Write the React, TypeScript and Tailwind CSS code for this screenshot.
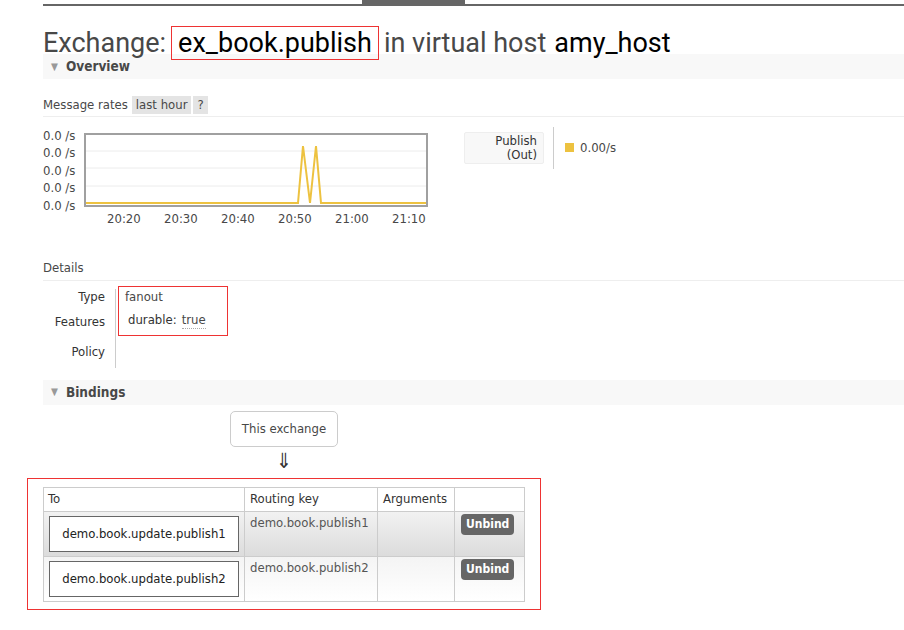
import React from 'react'

const body = { fontFamily: '"DejaVu Sans Condensed", "DejaVu Sans", Tahoma, sans-serif' }

const SectionHeader = ({ title }: { title: string }) => (
  <div className="flex h-[25px] items-center bg-[#f8f8f8] pl-[8px]">
    <span className="mr-[8px] text-[10px] leading-none text-[#999]">▼</span>
    <span className="text-[13.5px] font-bold text-[#484848]">{title}</span>
  </div>
)

const Chart = () => {
  const labels = ['0.0 /s', '0.0 /s', '0.0 /s', '0.0 /s', '0.0 /s']
  const times = ['20:20', '20:30', '20:40', '20:50', '21:00', '21:10']
  return (
    <div className="flex flex-col">
      <div className="flex">
        <div className="-mt-[4px] flex h-[84px] w-[41px] flex-col justify-between text-[13px] leading-[14px] text-[#484848]">
          {labels.map((l, i) => (
            <span key={i}>{l}</span>
          ))}
        </div>
        <svg width="344" height="75">
          <rect x="1" y="1" width="342" height="72" fill="#fff" stroke="#a0a0a0" strokeWidth="2" />
          {[18, 35, 53].map((y) => (
            <line key={y} x1="2" x2="342" y1={y} y2={y} stroke="#ececec" strokeWidth="1" />
          ))}
          <polyline
            points="2,70 214,70 219,13 226,70 232,13 237,70 342,70"
            fill="none"
            stroke="#edc240"
            strokeWidth="2"
            strokeLinejoin="miter"
          />
        </svg>
      </div>
      <div className="-mt-[4px] ml-[64px] flex gap-[21px] text-[13px] text-[#484848]">
        {times.map((t) => (
          <span key={t} className="w-[36px]">{t}</span>
        ))}
      </div>
    </div>
  )
}

const App = () => {
  return (
    <div className="min-h-[630px] w-[904px] bg-white pl-[43px] text-[#484848]" style={body}>
      <div className="relative h-[6px] border-b-2 border-[#666]">
        <div className="absolute left-[319px] top-0 h-[6px] w-[103px] bg-[#666]" />
      </div>

      <h1 className="mt-[20px] flex items-center text-[27px] leading-[30px] text-[#484848]" style={{ fontFamily: 'Roboto, "DejaVu Sans Condensed", sans-serif' }}>
        <span>Exchange:</span>
        <span className="ml-[5px] border border-[#ee3333] px-[6px] py-[1px] text-black">ex_book.publish</span>
        <span className="ml-[5px]">in virtual host</span>
        <span className="ml-[8px] text-black">amy_host</span>
      </h1>

      <div className="-mt-[6px]">
        <SectionHeader title="Overview" />
      </div>

      <div className="mt-[16px] flex items-center border-b border-[#eee] pb-[1px] text-[13px]">
        <span className="mr-[4px]">Message rates</span>
        <span className="bg-[#e4e4e4] px-[4px] leading-[18px]">last hour</span>
        <span className="ml-[2px] bg-[#e4e4e4] px-[4px] leading-[18px]">?</span>
      </div>

      <div className="mt-[16px] flex items-start">
        <Chart />
        <div className="-mt-[6px] ml-[36px] flex items-center">
          <div className="rounded-[2px] border border-[#eee] bg-[#f8f8f8] px-[6px] py-[1px] text-right text-[13px] leading-[14px] text-[#333]">
            <div className="w-[66px]">Publish</div>
            <div>(Out)</div>
          </div>
          <div className="ml-[9px] h-[42px] w-px bg-[#ccc]" />
          <div className="ml-[11px] flex items-center">
            <span className="h-[9px] w-[9px] bg-[#edc240]" />
            <span className="ml-[6px] text-[13px] text-[#484848]">0.00/s</span>
          </div>
        </div>
      </div>

      <div className="mt-[30px] border-b border-[#eee] pb-[2px] text-[13px]">Details</div>

      <div className="mt-[8px] flex">
        <div className="flex w-[62px] flex-col items-end text-[13px] text-[#333]">
          <span className="-mt-[1px] leading-[18px]">Type</span>
          <span className="mt-[7px] leading-[18px]">Features</span>
          <span className="mt-[12px] leading-[18px]">Policy</span>
        </div>
        <div className="ml-[10px] h-[79px] w-px bg-[#ccc]" />
        <div className="-mt-[3px] ml-[2px] flex h-[50px] w-[110px] flex-col border border-[#ee3333] pl-[6px] pt-[1px] text-[13px]">
          <span className="leading-[18px]">fanout</span>
          <div className="mt-[5px] flex items-end pl-[3px]">
            <span className="leading-[18px] text-[#333]">durable:</span>
            <span className="ml-[5px] border-b border-dotted border-[#aaa] leading-[16px]">true</span>
          </div>
        </div>
      </div>

      <div className="mt-[12px]">
        <SectionHeader title="Bindings" />
      </div>

      <div className="mt-[6px] flex w-[482px] flex-col">
        <div className="ml-[187px] flex w-[108px] flex-col items-center">
          <div className="flex h-[36px] w-[108px] items-center justify-center rounded-[5px] border border-[#ccc] text-[13px]">
            This exchange
          </div>
          <div className="mt-[3px] text-[21px] leading-[22px] text-[#333]">⇓</div>
        </div>
      </div>

      <div className="-ml-[16px] mt-[6px] w-[514px] border border-[#ee3333] pb-[7px] pl-[15px] pt-[8px]">
        <table className="w-[482px] border-collapse text-[13px]">
          <thead>
            <tr className="h-[24px] text-left text-[#333]">
              <th className="w-[201px] border border-[#ccc] px-[4px] font-normal">To</th>
              <th className="w-[133px] border border-[#ccc] px-[5px] font-normal">Routing key</th>
              <th className="w-[77px] border border-[#ccc] px-[5px] font-normal">Arguments</th>
              <th className="border border-[#ccc]" />
            </tr>
          </thead>
          <tbody>
            {[1, 2].map((n) => (
              <tr
                key={n}
                className={n === 1 ? 'h-[45px] bg-gradient-to-b from-[#f2f2f2] to-[#dcdcdc]' : 'h-[45px] bg-gradient-to-b from-[#f4f4f4] to-[#ffffff]'}
              >
                <td className="border border-[#ccc] px-[5px] align-middle">
                  <div className="flex h-[36px] w-[190px] items-center justify-center border border-[#666] bg-white text-[#222]">
                    demo.book.update.publish{n}
                  </div>
                </td>
                <td className="border border-[#ccc] px-[5px] pt-[1px] align-top text-[#555]">demo.book.publish{n}</td>
                <td className="border border-[#ccc]" />
                <td className="border border-[#ccc] px-[6px] pt-[2px] align-top">
                  <span className="inline-block rounded-[4px] bg-[#666] px-[5px] text-[12px] font-bold leading-[21px] text-white">
                    Unbind
                  </span>
                </td>
              </tr>
            ))}
          </tbody>
        </table>
      </div>
    </div>
  )
}

export default App
